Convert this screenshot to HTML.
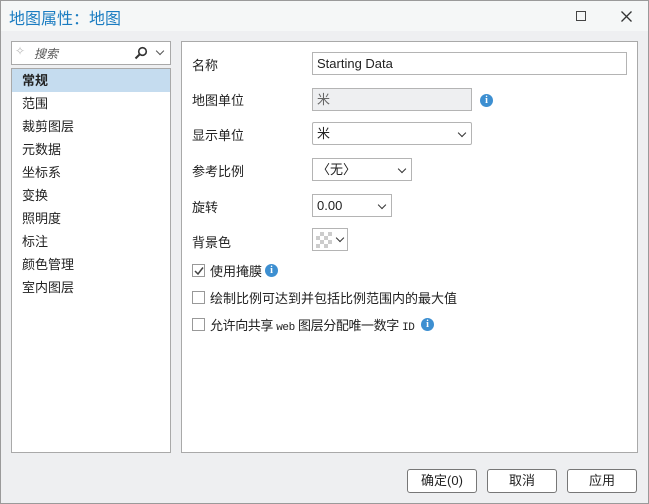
<!DOCTYPE html>
<html><head><meta charset="utf-8"><style>
*{box-sizing:border-box;margin:0;padding:0}
body{width:649px;height:504px;overflow:hidden;font-family:"Liberation Sans","Noto Sans CJK SC",sans-serif;font-size:13px;color:#222;background:#eeeff1;position:relative}
.frame{position:absolute;left:0;top:0;width:649px;height:504px;border:1px solid #9a9a9a;z-index:5;pointer-events:none}
.title{position:absolute;left:0;top:0;width:649px;height:31px;background:#f5f7f7}
.title span{position:absolute;left:9px;top:5px;font-size:16px;color:#1a7cc1}
.abs{position:absolute}
.box{position:absolute;background:#fff;border:1px solid #a9a9a9}
.lbl{position:absolute;left:192px;font-size:13px;white-space:nowrap}
.item{position:absolute;left:10px;height:23px;width:158px;line-height:23px;padding-left:10px}
.inp{position:absolute;background:#fff;border:1px solid #b4b4b4;height:23px;line-height:21px;padding-left:4px}
.chev{position:absolute;right:6px;top:7px;width:6px;height:6px;border-right:1.3px solid #333;border-bottom:1.3px solid #333;transform:rotate(45deg)}
.info{position:absolute;width:13px;height:13px;border-radius:50%;background:#3d8fd1;color:#fff;font:bold 10px "Liberation Serif",serif;text-align:center;line-height:13px}
.cb{position:absolute;left:192px;width:13px;height:13px;border:1px solid #999;background:#fff}
.btn{position:absolute;top:469px;width:70px;height:24px;border:1px solid #777;border-radius:3px;background:#fff;text-align:center;line-height:22px}
</style></head><body>
<div class="frame"></div>
<div class="title"><span>地图属性：地图</span>
<div class="abs" style="left:576px;top:11px;width:10px;height:10px;border:1.5px solid #444"></div>
<svg class="abs" style="left:621px;top:11px" width="11" height="11"><path d="M0.5 0.5L10.5 10.5M10.5 0.5L0.5 10.5" stroke="#333" stroke-width="1.3"/></svg>
</div>
<div class="box" style="left:11px;top:41px;width:160px;height:24px">
<span class="abs" style="left:3px;top:2px;color:#bbb;font-size:12px">✧</span>
<span class="abs" style="left:22px;top:3px;color:#555;font-style:italic;font-size:12px">搜索</span>
<svg class="abs" style="left:122px;top:4px" width="14" height="14"><circle cx="8.5" cy="5.5" r="3.8" fill="none" stroke="#333" stroke-width="1.6"/><path d="M6 8L1.5 12.5" stroke="#333" stroke-width="2"/></svg>
<div class="chev" style="right:7px;top:6px;border-color:#555"></div>
</div>
<div class="box" style="left:11px;top:68px;width:160px;height:385px">
<div class="item" style="left:0;top:0;background:#c5dcef;font-weight:bold">常规</div>
<div class="item" style="left:0;top:23px">范围</div>
<div class="item" style="left:0;top:46px">裁剪图层</div>
<div class="item" style="left:0;top:69px">元数据</div>
<div class="item" style="left:0;top:92px">坐标系</div>
<div class="item" style="left:0;top:115px">变换</div>
<div class="item" style="left:0;top:138px">照明度</div>
<div class="item" style="left:0;top:161px">标注</div>
<div class="item" style="left:0;top:184px">颜色管理</div>
<div class="item" style="left:0;top:207px">室内图层</div>
</div>
<div class="box" style="left:181px;top:41px;width:457px;height:412px"></div>
<div class="lbl" style="top:55px">名称</div>
<div class="inp" style="left:312px;top:52px;width:315px">Starting Data</div>
<div class="lbl" style="top:90px">地图单位</div>
<div class="inp" style="left:312px;top:88px;width:160px;background:#eeeff1;color:#666">米</div>
<div class="info" style="left:480px;top:94px">i</div>
<div class="lbl" style="top:125px">显示单位</div>
<div class="inp" style="left:312px;top:122px;width:160px;border-radius:2px">米<div class="chev"></div></div>
<div class="lbl" style="top:161px">参考比例</div>
<div class="inp" style="left:312px;top:158px;width:100px">〈无〉<div class="chev"></div></div>
<div class="lbl" style="top:197px">旋转</div>
<div class="inp" style="left:312px;top:194px;width:80px">0.00<div class="chev"></div></div>
<div class="lbl" style="top:232px">背景色</div>
<div class="inp" style="left:312px;top:228px;width:36px;padding:3px">
<div style="width:16px;height:16px;background:repeating-conic-gradient(#ccc 0 25%,#fff 0 50%) 0 0/8px 8px"></div><div class="chev" style="top:6px;right:4px"></div></div>
<div class="cb" style="top:264px"><svg class="abs" style="left:1px;top:1px" width="10" height="10"><path d="M1 5L4 8L9 1.5" fill="none" stroke="#444" stroke-width="1.5"/></svg></div>
<div class="lbl" style="left:210px;top:261px">使用掩膜</div>
<div class="info" style="left:265px;top:264px">i</div>
<div class="cb" style="top:291px"></div>
<div class="lbl" style="left:210px;top:288px">绘制比例可达到并包括比例范围内的最大值</div>
<div class="cb" style="top:318px"></div>
<div class="lbl" style="left:210px;top:315px;letter-spacing:-0.4px">允许向共享 <span style="font-family:'Liberation Mono',monospace;font-size:11px">web</span> 图层分配唯一数字 <span style="font-family:'Liberation Mono',monospace;font-size:11px">ID</span></div>
<div class="info" style="left:421px;top:318px">i</div>
<div class="btn" style="left:407px">确定(0)</div>
<div class="btn" style="left:487px">取消</div>
<div class="btn" style="left:567px">应用</div>
</body></html>
